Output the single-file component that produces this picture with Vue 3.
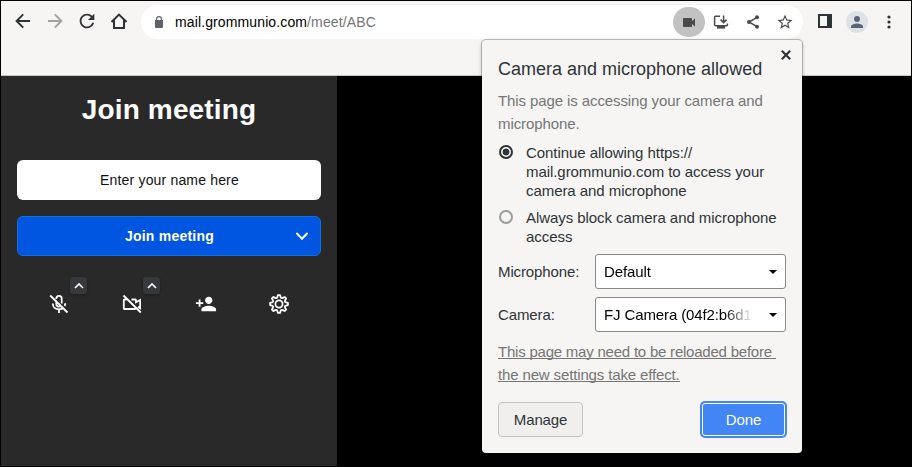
<script setup>
import { ref } from 'vue'

const choice = ref('allow')
const options = [
  { id: 'allow', lines: ['Continue allowing https://', 'mail.grommunio.com to access your', 'camera and microphone'] },
  { id: 'block', lines: ['Always block camera and microphone', 'access'] },
]
const devices = [
  { label: 'Microphone:', value: 'Default' },
  { label: 'Camera:', value: 'FJ Camera (04f2:b6d1' },
]

// Gear outline: eight rounded teeth around the centre of a 20px box
const gear = (() => {
  const point = (r, deg) => {
    const a = (deg * Math.PI) / 180
    return `${(10 + r * Math.sin(a)).toFixed(2)} ${(10 - r * Math.cos(a)).toFixed(2)}`
  }
  const parts = []
  for (let i = 0; i < 8; i++) {
    const a = i * 45
    parts.push(`${i ? 'L' : 'M'}${point(9, a - 7)}L${point(9, a + 7)}L${point(7.2, a + 13)}Q${point(5.6, a + 22.5)} ${point(7.2, a + 32)}`)
  }
  return parts.join('') + 'Z'
})()
</script>

<template>
  <div class="window">
    <header class="toolbar">
      <nav class="nav">
        <svg class="tool" viewBox="0 0 16 16"><path class="line" d="M15 8H2.4M8.2 1.4 1.6 8l6.6 6.6" /></svg>
        <svg class="tool faded" viewBox="0 0 16 16"><path class="line" d="M1 8h12.6M7.8 1.4 14.4 8l-6.6 6.6" /></svg>
        <svg class="reload" viewBox="0 0 24 24"><path d="M17.65 6.35A7.958 7.958 0 0 0 12 4c-4.42 0-7.99 3.58-7.99 8s3.57 8 7.99 8c3.73 0 6.84-2.55 7.73-6h-2.08A5.99 5.99 0 0 1 12 18c-3.31 0-6-2.69-6-6s2.69-6 6-6c1.66 0 3.14.69 4.22 1.78L13 11h7V4z" /></svg>
        <svg class="tool" viewBox="0 0 16 16"><path class="line" d="M.5 9 8 1.600 15.500 9M.5 8.200H3V15h10V8.200h2.500" /></svg>
      </nav>
      <div class="omnibox">
        <svg class="lock" viewBox="0 0 8 12"><path d="M1 4H0v7q0 1 1 1h6q1 0 1-1V4H7V3a3 3 0 0 0-6 0zm1.2 0V3a1.8 1.8 0 0 1 3.6 0v1z" /></svg>
        <span class="url">mail.grommunio.com<span class="path">/meet/ABC</span></span>
        <div class="actions">
          <span class="cam-chip"><svg viewBox="0 0 12 9"><path d="M.8 0h7.4q.8 0 .8.8V3l3-2.5v8L9 6v2.2q0 .8-.8.8H.8Q0 9 0 8.2V.8Q0 0 .8 0z" /></svg></span>
          <svg class="act" viewBox="0 0 16 16"><path class="thin" d="M7 2.2H2.6q-1 0-1 1v7.6q0 1 1 1h10.8q1 0 1-1V9.5M10.6 1.5v6.8M7.6 5.6l3 3 3-3" /><path d="M4 12h8v2.6H4z" /></svg>
          <svg class="act" viewBox="0 0 16 16"><path class="thin" d="M12 3.4 4 8l8 4.6" /><circle cx="12" cy="3.3" r="2" /><circle cx="4" cy="8" r="2" /><circle cx="12" cy="12.7" r="2" /></svg>
          <svg class="star" viewBox="0 0 24 24"><path d="m22 9.24-7.19-.62L12 2 9.19 8.63 2 9.24l5.46 4.73L5.82 21 12 17.27 18.18 21l-1.63-7.03L22 9.24zM12 15.4l-3.76 2.27 1-4.28-3.32-2.88 4.38-.38L12 6.1l1.71 4.04 4.38.38-3.32 2.88 1 4.28L12 15.4z" /></svg>
        </div>
      </div>
      <div class="side">
        <svg class="panel-icon" viewBox="0 0 14 14"><path fill-rule="evenodd" d="M0 0h14v14H0zM2 2v10h7V2z" /></svg>
        <span class="avatar"><svg viewBox="0 0 12 12"><circle cx="6" cy="3" r="3" /><path d="M0 12v-1.5C0 8.500 4 7.500 6 7.500s6 1 6 3V12z" /></svg></span>
        <svg class="dots" viewBox="0 0 4 14"><circle cx="2" cy="2" r="1.6" /><circle cx="2" cy="7" r="1.6" /><circle cx="2" cy="12" r="1.600" /></svg>
      </div>
    </header>

    <main class="content">
      <section class="join">
        <h1>Join meeting</h1>
        <div class="name">Enter your name here</div>
        <button class="join-btn">
          <span>Join meeting</span>
          <svg viewBox="0 0 14 9"><path d="M2 1.500 7 6.800l5-5.300" /></svg>
        </button>
        <div class="controls">
          <div class="control">
            <svg class="media" viewBox="0 0 20 20"><path class="w" d="M7.300 5V4.500a2.700 2.700 0 0 1 5.400 0V9.500M7.300 7.500v2.400a2.700 2.700 0 0 0 4.300 2.200M3.800 9.500c0 3.600 2.700 5.800 6.200 5.800 1.300 0 2.500-.3 3.500-.9M16.200 9.300c0 1-.2 1.900-.6 2.700M10 15.500V19M1.200 1.500l17.300 17" /></svg>
            <span class="more"><svg viewBox="0 0 10 6"><path d="M1 5l4-4 4 4" /></svg></span>
          </div>
          <div class="control">
            <svg class="media" viewBox="0 0 20 20"><path class="w" d="M4.500 5.500H2.300q-.5 0-.5.500v8.500q0 .5.500.5h11.500M9.500 5.500h3.800q.6 0 .6.600V8.300l4.200-2.300v8.300l-2.200-1.500M1.500 1.500l17.300 17" /></svg>
            <span class="more"><svg viewBox="0 0 10 6"><path d="M1 5l4-4 4 4" /></svg></span>
          </div>
          <div class="control">
            <svg class="invite" viewBox="0 0 24 24"><path d="M15 12c2.210 0 4-1.790 4-4s-1.790-4-4-4-4 1.790-4 4 1.790 4 4 4zm-9-2V7H4v3H1v2h3v3h2v-3h3v-2H6zm9 4c-2.670 0-8 1.340-8 4v2h16v-2c0-2.660-5.330-4-8-4z" /></svg>
          </div>
          <div class="control">
            <svg class="media" viewBox="0 0 20 20"><path class="w gear" :d="gear" /><circle class="w gear" cx="10" cy="10" r="3.600" /></svg>
          </div>
        </div>
      </section>
    </main>

    <aside class="popup">
      <svg class="close" viewBox="0 0 10 10"><path d="M.8.8l8.400 8.400M9.200.8.8 9.200" /></svg>
      <h2>Camera and microphone allowed</h2>
      <p class="note">This page is accessing your camera and<br />microphone.</p>
      <div class="options">
        <div v-for="o in options" :key="o.id" class="option" @click="choice = o.id">
          <span class="radio" :class="{ on: choice === o.id }"></span>
          <span><span v-for="l in o.lines" :key="l" class="row">{{ l }}</span></span>
        </div>
      </div>
      <div class="devices">
        <template v-for="d in devices" :key="d.label">
          <span class="label">{{ d.label }}</span>
          <div class="select">
            <span class="value">{{ d.value }}</span>
            <svg viewBox="0 0 8 4"><path d="M0 0h8L4 4z" /></svg>
          </div>
        </template>
      </div>
      <p class="note reload-note"><span>This page may need to be reloaded before&nbsp;</span><br /><span class="last">the new settings take effect.</span></p>
      <footer class="buttons">
        <button class="manage">Manage</button>
        <button class="done">Done</button>
      </footer>
    </aside>
  </div>
</template>

<style>
body { background: #000; }
</style>

<style scoped>
* { box-sizing: border-box; }
svg { display: block; flex: none; }
button { font: inherit; padding: 0; }
.window { position: relative; width: 912px; height: 467px; padding: 1px; display: flex; flex-direction: column; background: #000; font-family: "Liberation Sans", Arial, sans-serif; font-size: 15px; color: #2e3436; overflow: hidden; }
.toolbar { height: 75px; flex: none; display: flex; align-items: flex-start; padding: 4px 0 0 14px; background: #f6f5f4; border-bottom: 1px solid #c4c8bd; }
.nav { display: flex; align-items: center; gap: 16px; height: 32px; width: 126px; fill: #2e3436; }
.tool { width: 16px; height: 16px; }
.reload { width: 22px; height: 22px; margin: 0 -3px; }
.line { fill: none; stroke: #2e3436; stroke-width: 2; }
.faded { opacity: .42; }
.omnibox { width: 662px; height: 34px; border-radius: 17px; background: #fff; display: flex; align-items: center; padding: 0 10px 0 14px; }
.lock { width: 8px; height: 12px; fill: #5f6368; }
.url { margin-left: 12px; font-size: 14px; color: #000; white-space: nowrap; letter-spacing: .12px; }
.path { color: #757575; }
.actions { margin-left: auto; display: flex; align-items: center; gap: 16px; fill: #4a4a4a; }
.cam-chip { width: 32px; height: 30px; margin-right: -8px; border-radius: 16px; background: #c2c2c2; display: flex; align-items: center; justify-content: center; }
.cam-chip svg { width: 12px; height: 9px; }
.act { width: 16px; height: 16px; }
.star { width: 18px; height: 18px; margin: 0 -1px; }
.thin { fill: none; stroke: #4a4a4a; stroke-width: 1.5; }
.side { display: flex; align-items: center; height: 34px; margin-left: 15px; }
.panel-icon { width: 14px; height: 14px; fill: #2e3436; margin-top: -2px; }
.avatar { width: 22px; height: 22px; margin-left: 14px; border-radius: 50%; background: #dee1e6; display: flex; align-items: center; justify-content: center; }
.avatar svg { width: 12px; height: 12px; fill: #5a6478; }
.dots { width: 4px; height: 14px; margin-left: 19px; fill: #2e3436; }
.content { flex: 1; width: 910px; display: flex; background: #000; }
.join { width: 336px; background: #292929; padding: 16px 16px 0; color: #fff; }
h1 { margin: 0; height: 36px; line-height: 36px; text-align: center; font-size: 28px; font-weight: 700; letter-spacing: .15px; }
.name { height: 40px; margin-top: 32px; border-radius: 6px; background: #fff; color: #111; font-size: 14px; line-height: 40px; text-align: center; letter-spacing: .17px; text-indent: 1px; }
.join-btn { position: relative; display: flex; align-items: center; justify-content: center; width: 304px; height: 40px; margin-top: 16px; border: 1px solid #0a75df; border-radius: 6px; background: #0056e0; color: #fff; font-size: 14px; font-weight: 700; letter-spacing: .23px; text-indent: 1px; }
.join-btn svg { position: absolute; right: 11px; top: 15px; width: 14px; height: 9px; fill: none; stroke: #fff; stroke-width: 2; stroke-linecap: round; }
.controls { display: flex; justify-content: space-between; padding: 38px 32px 0; }
.control { position: relative; width: 20px; height: 20px; display: flex; align-items: center; justify-content: center; }
.media { width: 20px; height: 20px; }
.w { fill: none; stroke: #fff; stroke-width: 1.8; }
.gear { stroke-width: 1.800; stroke-linejoin: round; }
.invite { width: 22px; height: 22px; fill: #fff; }
.more { position: absolute; left: 21px; top: -17px; width: 17px; height: 17px; border-radius: 3px; background: #36383c; box-shadow: 0 1px 3px rgba(0, 0, 0, .3); display: flex; align-items: center; justify-content: center; }
.more svg { width: 10px; height: 6px; fill: none; stroke: #fff; stroke-width: 1.7; }
.popup { position: absolute; left: 482px; top: 40px; width: 320px; height: 413px; padding: 16px; border-radius: 4px; background: #f6f5f4; box-shadow: 0 0 0 1px rgba(0, 0, 0, .2), 0 1px 4px rgba(0, 0, 0, .3); }
.close { position: absolute; right: 11px; top: 10px; width: 10px; height: 10px; stroke: #2e3436; stroke-width: 2.2; }
h2 { margin: 0; font-size: 18px; font-weight: 400; line-height: 26px; white-space: nowrap; }
.note { margin: 7px 0 0; color: #757575; line-height: 23px; white-space: nowrap; letter-spacing: -.1px; }
.options { display: flex; flex-direction: column; gap: 8px; margin-top: 8px; line-height: 19px; letter-spacing: -.06px; }
.option { display: flex; gap: 13px; white-space: nowrap; }
.row { display: block; }
.radio { flex: none; width: 14px; height: 14px; margin: 2px 0 0 1px; border: 2px solid #9a9d9d; border-radius: 50%; }
.radio.on { border-color: #2e3436; background: radial-gradient(circle, #2e3436 3.100px, transparent 3.800px); }
.devices { display: grid; grid-template-columns: 97px 191px; row-gap: 8px; align-items: center; margin-top: 8px; }
.label { letter-spacing: -.12px; }
.select { display: flex; align-items: center; justify-content: space-between; height: 35px; padding: 0 8px; border: 1px solid #888a85; border-radius: 3px; background: #fff; color: #000; letter-spacing: -.12px; }
.select svg { width: 8px; height: 4px; }
.value { width: 150px; white-space: nowrap; -webkit-mask-image: linear-gradient(to right, #000 120px, transparent 149px); mask-image: linear-gradient(to right, #000 120px, transparent 149px); }
.reload-note { margin-top: 8px; letter-spacing: -.22px; }
.reload-note span { display: inline-block; height: 19px; line-height: 23px; border-bottom: 1px solid #757575; vertical-align: top; }
.reload-note .last { letter-spacing: -.14px; }
.buttons { display: flex; justify-content: space-between; align-items: center; margin-top: 16px; }
.manage { width: 85px; height: 35px; border: 1px solid #c3c3c2; border-radius: 4px; background: #f0efee; color: #2e3436; letter-spacing: -.15px; }
.done { width: 83px; height: 33px; margin-right: 1px; border: 1px solid #fff; border-radius: 3px; background: #4285f4; color: #fff; box-shadow: 0 0 0 2px #4285f4; letter-spacing: -.15px; }
</style>
